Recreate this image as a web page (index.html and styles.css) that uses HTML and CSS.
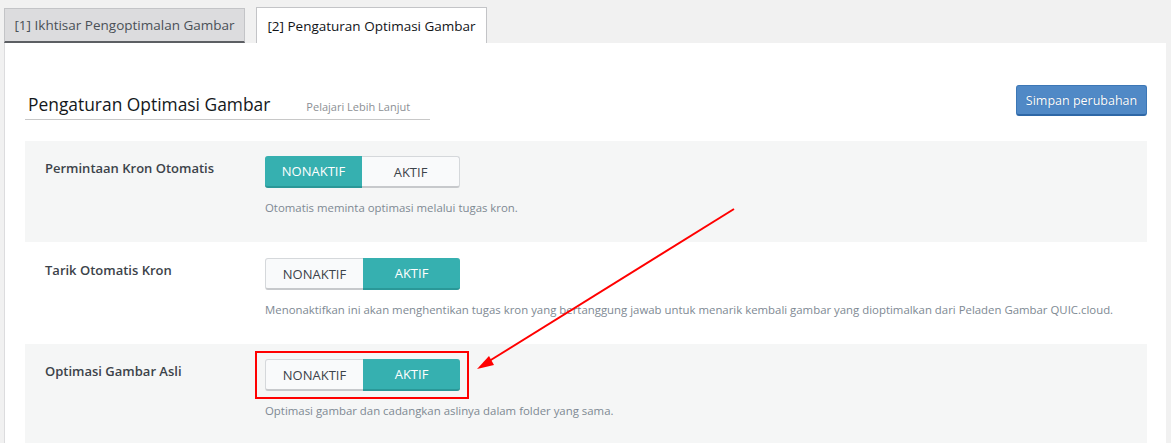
FILE: index.html
```html
<!DOCTYPE html>
<html lang="id">
<head>
<meta charset="utf-8">
<title>Pengaturan Optimasi Gambar</title>
<link rel="stylesheet" href="styles.css">
</head>
<body>
<div class="tabs">
  <div class="tab tab-inactive">[1] Ikhtisar Pengoptimalan Gambar</div>
  <div class="tab tab-active">[2] Pengaturan Optimasi Gambar</div>
</div>
<div class="panel">
  <div class="head">
    <div class="title-wrap">
      <h2 class="title">Pengaturan Optimasi Gambar</h2>
      <span class="learn">Pelajari Lebih Lanjut</span>
    </div>
    <button class="save">Simpan perubahan</button>
  </div>
  <div class="rows">
    <div class="row row-gray">
      <div class="label">Permintaan Kron Otomatis</div>
      <div class="field">
        <div class="toggle"><span class="opt on">NONAKTIF</span><span class="opt">AKTIF</span></div>
        <div class="desc">Otomatis meminta optimasi melalui tugas kron.</div>
      </div>
    </div>
    <div class="row">
      <div class="label">Tarik Otomatis Kron</div>
      <div class="field">
        <div class="toggle"><span class="opt">NONAKTIF</span><span class="opt on">AKTIF</span></div>
        <div class="desc">Menonaktifkan ini akan menghentikan tugas kron yang bertanggung jawab untuk menarik kembali gambar yang dioptimalkan dari Peladen Gambar QUIC.cloud.</div>
      </div>
    </div>
    <div class="row row-gray">
      <div class="label">Optimasi Gambar Asli</div>
      <div class="field">
        <div class="toggle highlight"><span class="opt">NONAKTIF</span><span class="opt on">AKTIF</span></div>
        <div class="desc">Optimasi gambar dan cadangkan aslinya dalam folder yang sama.</div>
      </div>
    </div>
  </div>
</div>
<svg class="arrow" width="1171" height="443" viewBox="0 0 1171 443">
  <line x1="734" y1="209" x2="486" y2="363" stroke="#ff0000" stroke-width="2"/>
  <polygon points="477,369 489,356 494,365" fill="#ff0000"/>
</svg>
</body>
</html>
```
FILE: styles.css
```css
html, body {
  margin: 0;
  padding: 0;
}
body {
  background: #f1f1f1;
  font-family: "Open Sans", "Noto Sans", sans-serif;
  color: #32373c;
  width: 1171px;
  height: 443px;
  overflow: hidden;
  position: relative;
}
.tabs {
  display: flex;
  align-items: flex-end;
  padding: 7px 0 0 4px;
  gap: 11px;
}
.tab {
  box-sizing: border-box;
  font-size: 13.5px;
  display: flex;
  align-items: center;
  justify-content: center;
}
.tab-inactive {
  width: 241px;
  height: 35px;
  background: #dcdcde;
  border: 1px solid #c3c4c7;
  border-bottom: 2px solid #5c5f63;
  color: #4a5057;
}
.tab-active {
  width: 231px;
  height: 36px;
  background: #fff;
  border: 1px solid #c3c4c7;
  border-bottom: none;
  color: #111417;
}
.panel {
  margin-left: 4px;
  width: 1162px;
  box-sizing: border-box;
  background: #fff;
  border-left: 1px solid #dcdcde;
  padding: 0 19px 0 20px;
  height: 401px;
}
.head {
  display: flex;
  justify-content: space-between;
  align-items: flex-start;
  padding-top: 42px;
  height: 98px;
  box-sizing: border-box;
}
.title-wrap {
  display: flex;
  align-items: baseline;
  width: 405px;
  border-bottom: 1px solid #c8c8c8;
  padding: 4px 0 4px 3px;
  margin-top: 4px;
  box-sizing: border-box;
}
.title {
  margin: 0;
  font-size: 17.4px;
  font-weight: 500;
  color: #14181b;
  line-height: 22px;
}
.learn {
  font-size: 11px;
  color: #8c8f94;
  margin-left: 36px;
}
.save {
  font-family: inherit;
  font-size: 12.5px;
  color: #fff;
  background: #5089c6;
  border: 1px solid #3c77b6;
  border-bottom: 2px solid #2e67a6;
  border-radius: 3px;
  height: 31px;
  width: 131px;
  padding: 0;
  text-shadow: 0 0 1px #2a5f9a;
  cursor: pointer;
}
.row {
  display: flex;
  height: 102px;
  box-sizing: border-box;
  padding-top: 15px;
}
.row-gray {
  background: #f5f6f6;
  height: 101px;
}
.row:nth-child(2) {
  padding-top: 16px;
}
.label {
  width: 220px;
  padding-left: 20px;
  font-size: 13px;
  font-weight: 600;
  color: #3c434a;
  padding-top: 3px;
  line-height: 18px;
}
.field {
  display: flex;
  flex-direction: column;
}
.toggle {
  display: flex;
  width: 195px;
  height: 32px;
  box-sizing: border-box;
  border: 1px solid #d5d8db;
  border-bottom: 2px solid #c7c9cc;
  border-radius: 3px;
  background: #f9fafb;
  position: relative;
}
.opt {
  flex: 1;
  display: flex;
  align-items: center;
  justify-content: center;
  font-size: 13px;
  color: #3c434a;
}
.opt.on {
  background: #36b0b0;
  color: #fff;
  margin: -1px 0 -2px;
  border-bottom: 2px solid #2a9898;
}
.opt.on:first-child {
  margin-left: -1px;
  border-radius: 3px 0 0 3px;
}
.opt.on:last-child {
  margin-right: -1px;
  border-radius: 0 3px 3px 0;
}
.highlight::after {
  content: "";
  position: absolute;
  left: -11px;
  right: -10px;
  top: -9px;
  bottom: -10px;
  border: 2px solid #ff0000;
}
.desc {
  font-size: 11.4px;
  color: #7e8993;
  margin-top: 12px;
  line-height: 16px;
}
.arrow {
  position: absolute;
  left: 0;
  top: 0;
  pointer-events: none;
}
```
